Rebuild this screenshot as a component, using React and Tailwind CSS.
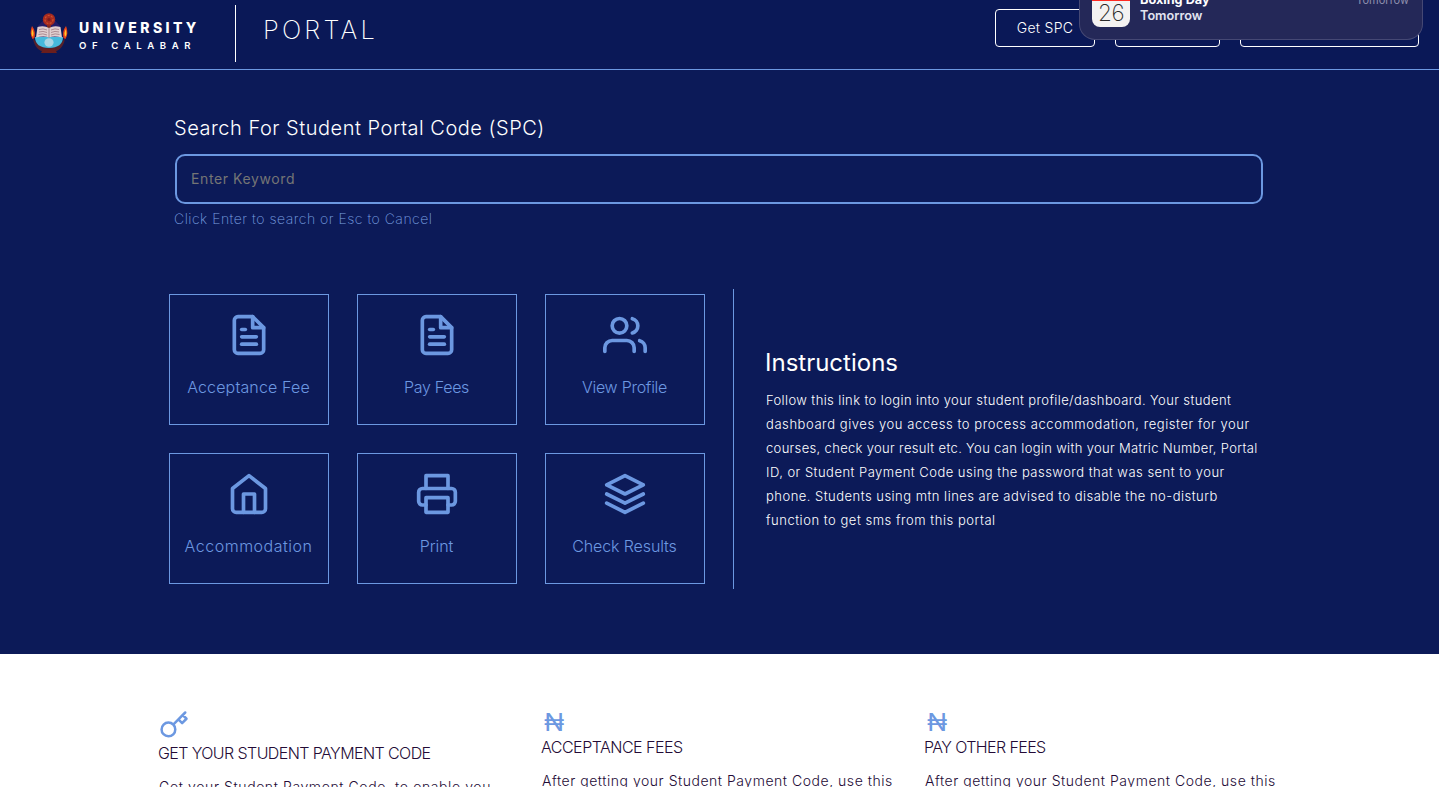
import { FiFileText, FiUsers, FiHome, FiPrinter, FiLayers, FiKey } from 'react-icons/fi'

const tiles = [
  { Icon: FiFileText, label: 'Acceptance Fee', tracking: 'tracking-[0.15px]' },
  { Icon: FiFileText, label: 'Pay Fees', tracking: 'tracking-[-0.3px]' },
  { Icon: FiUsers, label: 'View Profile', tracking: 'tracking-[-0.26px]' },
  { Icon: FiHome, label: 'Accommodation', tracking: 'tracking-[0.5px]' },
  { Icon: FiPrinter, label: 'Print', tracking: 'tracking-[-0.1px]' },
  { Icon: FiLayers, label: 'Check Results', tracking: 'tracking-[-0.12px]' },
]

const instructions = [
  { text: 'Follow this link to login into your student profile/dashboard. Your student', tracking: 'tracking-[0.39px]' },
  { text: 'dashboard gives you access to process accommodation, register for your', tracking: 'tracking-[0.57px]' },
  { text: 'courses, check your result etc. You can login with your Matric Number, Portal', tracking: 'tracking-[0.33px]' },
  { text: 'ID, or Student Payment Code using the password that was sent to your', tracking: 'tracking-[0.48px]' },
  { text: 'phone. Students using mtn lines are advised to disable the no-disturb', tracking: 'tracking-[0.48px]' },
  { text: 'function to get sms from this portal', tracking: 'tracking-[0.53px]' },
]

function Crest() {
  return (
    <svg className="h-[44px] w-[40px] shrink-0" viewBox="0 0 40 44">
      <path d="M20 3L31 15L30 30H10L9 15Z" fill="#241c66" />
      <path d="M4 27C5 36 10 40 16 41H24C30 40 35 36 36 27L33 31H7Z" fill="#57212a" />
      <path d="M6 26H34C34 33 29 37 20 37S6 33 6 26Z" fill="#46b9dc" />
      <path d="M14 38H26L28 42H12Z" fill="#6b1e1d" />
      <ellipse cx="20" cy="31.5" rx="4.6" ry="4.2" fill="#a9d5e4" />
      <path d="M18 12H22V18H18Z" fill="#7a2a20" />
      <circle cx="20" cy="8.5" r="6.200" fill="#a52a20" />
      <circle cx="20" cy="8.5" r="4" fill="none" stroke="#d0532a" strokeWidth="1.2" strokeDasharray="2 1.4" />
      <circle cx="20" cy="8.5" r="1.6" fill="#7b1d1d" />
      <path d="M8.500 16Q15 14 20 17Q25 14 31.500 16L33 26.500Q25 24.500 20 26.500Q15 24.500 7 26.500Z" fill="#e0cfd0" />
      <path d="M20 17V27M10 18.500Q14 17 18 19M10 21Q14 19.500 18 21.500M9.500 23.500Q14 22 18 24M22 19Q26 17 30 18.500M22 21.500Q26 19.500 30 21M22 24Q26 22 30.500 23.500" fill="none" stroke="#9f7b83" strokeWidth="0.8" />
      <path d="M3 15Q7 20 5.500 27L3.500 28Q0 22 3 15Z" fill="#e5401c" />
      <path d="M3.300 18Q5.500 22 4 26Q1.500 23 3.300 18Z" fill="#ffc928" />
      <path d="M37 15Q33 20 34.500 27L36.500 28Q40 22 37 15Z" fill="#e5401c" />
      <path d="M36.700 18Q34.500 22 36 26Q38.500 23 36.700 18Z" fill="#ffc928" />
    </svg>
  )
}

function Header() {
  return (
    <header className="flex h-[70px] items-start border-b border-[#6c98e1] bg-[#0a1857] pl-[29px] pr-5">
      <div className="flex pt-[11px]">
        <Crest />
        <div className="ml-[10px] mt-[8px] w-[156px] whitespace-nowrap">
          <div className="text-[14px] font-extrabold leading-[18px] tracking-[3.4px]">UNIVERSITY</div>
          <div className="text-[9.6px] font-semibold leading-[18px] tracking-[5.6px]">OF CALABAR</div>
        </div>
      </div>
      <div className="mt-[5px] h-[57px] w-px bg-white" />
      <div className="ml-[27px] mt-[15px] text-[25.5px] font-extralight leading-[30px] tracking-[3.2px]">PORTAL</div>
      <nav className="ml-auto flex gap-5 pt-[9px]">
        <button className="h-[38px] w-[100px] rounded border border-white pb-px text-[14px] font-light tracking-[0.3px]">Get SPC</button>
        <button className="h-[38px] w-[105px] rounded border border-white" />
        <button className="h-[38px] w-[179px] rounded border border-white" />
      </nav>
    </header>
  )
}

function Notification() {
  return (
    <div className="absolute right-4 top-0 flex h-[40px] w-[344px] overflow-hidden rounded-b-[16px] border border-t-0 border-[#454874] bg-[#242858] pl-3 pr-[13px]">
      <div className="h-[27px] w-[38px] overflow-hidden rounded-b-[8px] bg-[#f3f2f1] text-center text-[#2b2b2b]">
        <div className="h-px bg-[#ff2a22]" />
        <div className="text-[22.5px] font-extralight leading-[24px] tracking-[-0.6px]">26</div>
      </div>
      <div className="-mt-[8px] ml-[10px] text-[12.7px] leading-4 text-[#e2e4f0]">
        <div className="font-bold text-white">Boxing Day</div>
        <div className="font-semibold">Tomorrow</div>
      </div>
      <div className="-mt-[8px] ml-auto text-[11px] leading-4 text-[#8f90ae]">Tomorrow</div>
    </div>
  )
}

function Feature({ icon, title, titleClass, body, bodyClass }) {
  return (
    <div className="w-[383px] shrink-0 whitespace-nowrap">
      {icon}
      <h3 className={'text-[16px] font-light leading-6 ' + titleClass}>{title}</h3>
      <p className={'mt-[10px] text-[14px] font-light leading-6 ' + bodyClass}>{body}</p>
    </div>
  )
}

const naira = <div className="mt-[1px] h-[24px] pl-[2px] text-[24px] leading-[24px] text-[#6c98e1]"><span className="inline-block origin-left scale-x-110">₦</span></div>

export default function App() {
  return (
    <div className="relative h-[787px] w-[1439px] overflow-hidden bg-white font-['Inter',sans-serif] text-white">
      <Header />
      <main className="h-[584px] bg-[#0c1a58]">
        <section className="whitespace-nowrap pl-[174px] pt-[43px]">
          <h1 className="text-[20px] font-light leading-[30px] tracking-[0.51px]">Search For Student Portal Code (SPC)</h1>
          <input
            className="mt-[11px] block h-[50px] w-[1088px] translate-x-px rounded-[10px] border-2 border-[#6c98e1] bg-transparent px-[14px] pb-[2px] text-[14px] tracking-[0.6px] outline-none placeholder:text-[#757575]"
            placeholder="Enter Keyword"
          />
          <p className="mt-[4px] text-[14px] font-extralight leading-[21px] tracking-[0.5px] text-[#7ba0e0]">Click Enter to search or Esc to Cancel</p>
        </section>
        <section className="mt-[60px] flex pl-[169px]">
          <div className="grid grid-cols-[repeat(3,160px)] content-start gap-7 pt-[5px]">
            {tiles.map(({ Icon, label, tracking }) => (
              <div key={label} className="flex h-[131px] flex-col items-center border border-[#6c98e1] pt-[17.5px] text-[#6c98e1]">
                <Icon className="-ml-[1px] size-[44px]" />
                <div className={'-ml-px mt-[18.5px] text-[16px] font-light leading-6 ' + tracking}>{label}</div>
              </div>
            ))}
          </div>
          <div className="ml-7 h-[300px] w-px bg-[#6c98e1]" />
          <div className="ml-[32px] whitespace-nowrap pt-[58px]">
            <h2 className="-ml-px text-[24px] leading-8">Instructions</h2>
            <div className="mt-[9px] text-[13px] font-light leading-6">
              {instructions.map(({ text, tracking }) => (
                <p key={text} className={tracking}>{text}</p>
              ))}
            </div>
          </div>
        </section>
      </main>
      <section className="flex pl-[159px] pt-[56px] text-[#240b36]">
        <Feature
          icon={<FiKey className="size-[30px] text-[#6c98e1]" />}
          title="GET YOUR STUDENT PAYMENT CODE"
          titleClass="-ml-px mt-[1px] tracking-[-0.58px]"
          body="Get your Student Payment Code, to enable you"
          bodyClass="tracking-[0.6px]"
        />
        <Feature
          icon={naira}
          title="ACCEPTANCE FEES"
          titleClass="-ml-px tracking-[-0.5px]"
          body="After getting your Student Payment Code, use this"
          bodyClass="tracking-[0.53px]"
        />
        <Feature
          icon={naira}
          title="PAY OTHER FEES"
          titleClass="-ml-px tracking-[-0.6px]"
          body="After getting your Student Payment Code, use this"
          bodyClass="tracking-[0.53px]"
        />
      </section>
      <Notification />
    </div>
  )
}
